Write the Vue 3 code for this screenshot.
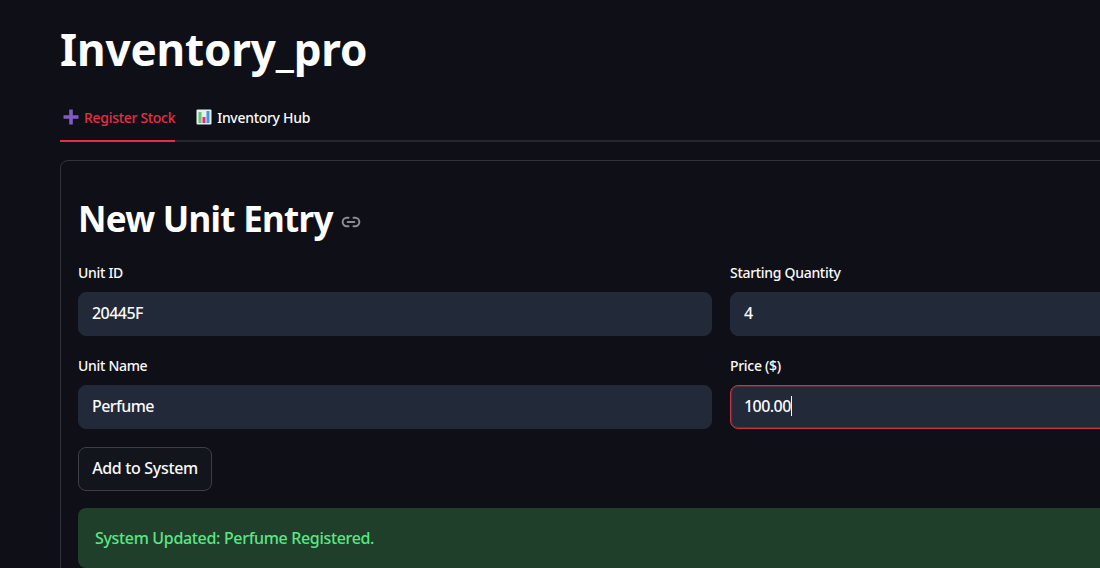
<script setup>
const rows = [
  [
    { id: 'unit-id', label: 'Unit ID', value: '20445F' },
    { id: 'qty', label: 'Starting Quantity', value: '4' },
  ],
  [
    { id: 'unit-name', label: 'Unit Name', value: 'Perfume' },
    { id: 'price', label: 'Price ($)', value: '100.00', focused: true },
  ],
]
</script>

<template>
  <div class="page">
    <main class="content">
      <h1 class="title">Inventory_pro</h1>

      <nav class="tabs">
        <button class="tab active">
          <svg class="tab-icon" viewBox="0 0 16 16" aria-hidden="true">
            <path d="M6.2 0.5h3.6v5.7h5.7v3.6H9.8v5.7H6.2V9.8H0.5V6.2h5.7z" fill="#7d5cc4" />
          </svg>
          <span>Register Stock</span>
        </button>
        <button class="tab">
          <svg class="tab-icon" viewBox="0 0 16 16" aria-hidden="true">
            <rect x="0.5" y="0.5" width="15" height="15" rx="1" fill="#e8edf0" />
            <rect x="2.5" y="3" width="3" height="11" fill="#63c76a" />
            <rect x="6.5" y="8" width="3" height="6" fill="#e8297a" />
            <rect x="10.5" y="2" width="3" height="12" fill="#3f9bdc" />
          </svg>
          <span>Inventory Hub</span>
        </button>
      </nav>

      <section class="card">
        <h2 class="heading">
          New Unit Entry
          <svg class="link-icon" viewBox="0 0 24 24" aria-hidden="true">
            <path d="M9 7H7a5 5 0 0 0 0 10h2M15 7h2a5 5 0 0 1 0 10h-2M8 12h8" fill="none" stroke="#8b8d94" stroke-width="2.4" stroke-linecap="round" />
          </svg>
        </h2>

        <div class="form-grid">
          <template v-for="row in rows" :key="row[0].id">
            <div v-for="field in row" :key="field.id" class="field">
              <label class="label" :for="field.id">{{ field.label }}</label>
              <div class="input" :class="{ focused: field.focused }">
                <span>{{ field.value }}</span><i v-if="field.focused" class="caret"></i>
              </div>
            </div>
          </template>
        </div>

        <button class="submit">Add to System</button>

        <div class="alert">System Updated: Perfume Registered.</div>
      </section>
    </main>
  </div>
</template>

<style>
html, body { margin: 0; background: #0f1017; }
</style>

<style scoped>
.page {
  width: 1100px;
  height: 568px;
  overflow: hidden;
  background: #0f1017;
  color: #fafafa;
  font-family: "Noto Sans", "Open Sans", sans-serif;
}
.content {
  width: 1320px;
  margin-left: 60px;
}
.title {
  margin: 0;
  padding-top: 21px;
  height: 59px;
  font-size: 44px;
  line-height: 56px;
  font-weight: 700;
  letter-spacing: -0.15px;
  color: #fff;
}
.tabs {
  display: flex;
  gap: 18px;
  margin-top: 16px;
  height: 44px;
  border-bottom: 2px solid #262730;
}
.tab {
  display: flex;
  align-items: center;
  gap: 5px;
  height: 46px;
  padding: 0 0 4px 3px;
  border: 0;
  background: none;
  color: #fafafa;
  font: inherit;
  font-size: 14px;
  font-weight: 500;
  letter-spacing: -0.3px;
  box-sizing: border-box;
}
.tab.active {
  color: #e62e45;
  border-bottom: 2px solid #e62e45;
  padding-bottom: 2px;
}
.tab-icon { width: 16px; height: 16px; }
.card {
  margin-top: 18px;
  padding: 16px 17px 0;
  height: 500px;
  border: 1px solid #31333b;
  border-radius: 8px;
}
.heading {
  display: flex;
  align-items: center;
  gap: 8px;
  margin: 20px 0 0;
  height: 44px;
  font-size: 35px;
  line-height: 44px;
  font-weight: 700;
  letter-spacing: -0.72px;
  color: #fff;
}
.link-icon { width: 20px; height: 20px; margin-top: 5px; }
.form-grid {
  display: grid;
  grid-template-columns: 634px 634px;
  column-gap: 18px;
  row-gap: 20px;
  margin-top: 22px;
}
.field { display: flex; flex-direction: column; }
.label {
  height: 29px;
  font-size: 14px;
  line-height: 20px;
  font-weight: 500;
  letter-spacing: -0.3px;
  color: #fafafa;
}
.input {
  display: flex;
  align-items: center;
  height: 44px;
  padding: 0 13px 2px;
  box-sizing: border-box;
  border: 1px solid #222939;
  border-radius: 8px;
  background: #222939;
  font-size: 16px;
  font-weight: 500;
  letter-spacing: -0.55px;
}
.input.focused {
  border-color: #c8334a;
  box-shadow: inset 0 0 0 1px rgba(200, 51, 74, 0.35);
}
.caret {
  width: 1px;
  height: 20px;
  background: #fafafa;
}
.submit {
  display: block;
  margin-top: 18px;
  width: 134px;
  height: 44px;
  border: 1px solid #3d3f47;
  border-radius: 8px;
  background: #13151c;
  color: #fafafa;
  font: inherit;
  font-size: 16px;
  font-weight: 500;
  letter-spacing: -0.33px;
  padding: 0 0 2px;
}
.alert {
  margin-top: 17px;
  height: 60px;
  padding: 0 17px;
  display: flex;
  align-items: center;
  border-radius: 8px;
  background: #1f3f2b;
  color: #5ae685;
  font-size: 16px;
  font-weight: 500;
  letter-spacing: -0.33px;
}
</style>
